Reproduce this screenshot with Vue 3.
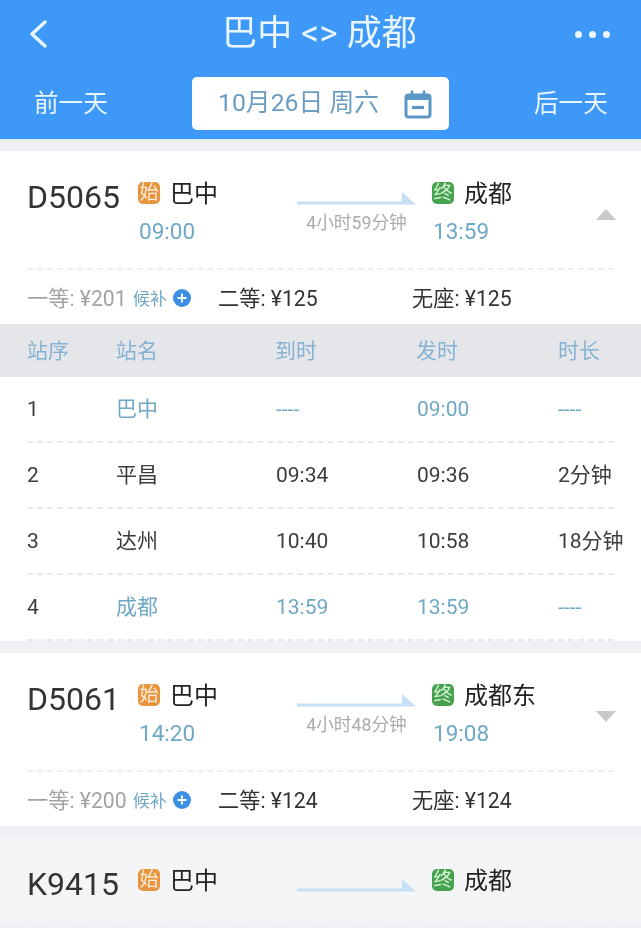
<script setup>
const stops = [
  { n: '1', name: '巴中', arr: '----', dep: '09:00', dur: '----', hi: true, hiDur: true },
  { n: '2', name: '平昌', arr: '09:34', dep: '09:36', dur: '2分钟' },
  { n: '3', name: '达州', arr: '10:40', dep: '10:58', dur: '18分钟' },
  { n: '4', name: '成都', arr: '13:59', dep: '13:59', dur: '----', hi: true, hiDur: true }
]
const trains = [
  { no: 'D5065', from: '巴中', dep: '09:00', to: '成都', arr: '13:59', dur: '4小时59分钟', first: '¥201', second: '¥125', none: '¥125', open: true },
  { no: 'D5061', from: '巴中', dep: '14:20', to: '成都东', arr: '19:08', dur: '4小时48分钟', first: '¥200', second: '¥124', none: '¥124', open: false },
  { no: 'K9415', from: '巴中', to: '成都', partial: true }
]
</script>

<template>
  <div class="page">
    <header class="top">
      <div class="bar">
        <svg class="back" width="18" height="28" viewBox="0 0 18 28"><path d="M16 2 L3 14 L16 26" fill="none" stroke="#e9f5ff" stroke-width="3.4" stroke-linecap="round" stroke-linejoin="round"/></svg>
        <div class="title">巴中 &lt;&gt; 成都</div>
        <div class="dots"><i></i><i></i><i></i></div>
      </div>
      <div class="dates">
        <span class="day">前一天</span>
        <div class="picker">
          <span class="picker-text">10月26日 周六</span>
          <svg class="cal" width="28" height="30" viewBox="0 0 28 30">
            <rect x="2" y="6" width="24" height="22" rx="2.500" fill="none" stroke="#5b97c6" stroke-width="3"/>
            <rect x="2" y="6" width="24" height="5" fill="#5b97c6"/>
            <path d="M8 2.500v6M20 2.500v6" stroke="#5b97c6" stroke-width="2.600" stroke-linecap="round"/>
            <path d="M8 18.500h12" stroke="#5b97c6" stroke-width="3.200"/>
          </svg>
        </div>
        <span class="day">后一天</span>
      </div>
    </header>

    <section v-for="t in trains" :key="t.no" class="card" :class="{ partial: t.partial }">
      <div class="head">
        <div class="no">{{ t.no }}</div>
        <div class="from">
          <div class="station"><b class="badge start">始</b><span class="st-name">{{ t.from }}</span></div>
          <div v-if="t.dep" class="time">{{ t.dep }}</div>
        </div>
        <div class="link">
          <svg class="arrow" width="119" height="14" viewBox="0 0 119 14"><path d="M0 9.500h105V0l14 12.500H0z" fill="#c6e0f5"/></svg>
          <div v-if="t.dur" class="dur">{{ t.dur }}</div>
        </div>
        <div class="to">
          <div class="station"><b class="badge end">终</b><span class="st-name">{{ t.to }}</span></div>
          <div v-if="t.arr" class="time">{{ t.arr }}</div>
        </div>
        <svg v-if="!t.partial" class="toggle" width="20" height="11" viewBox="0 0 20 11">
          <path :d="t.open ? 'M10 0 L20 11 H0 Z' : 'M0 0 H20 L10 11 Z'" fill="#c9c9c9"/>
        </svg>
      </div>
      <div v-if="!t.partial" class="prices">
        <span class="p1">一等: {{ t.first }}</span>
        <span class="wait">候补</span>
        <svg class="plus" width="18" height="18" viewBox="0 0 18 18"><circle cx="9" cy="9" r="9" fill="#3d8fe3"/><path d="M4.500 9h9M9 4.500v9" stroke="#fff" stroke-width="1.800"/></svg>
        <span class="p2">二等: {{ t.second }}</span>
        <span class="p3">无座: {{ t.none }}</span>
      </div>
      <div v-if="t.open" class="table">
        <div class="thead">
          <span>站序</span><span>站名</span><span>到时</span><span>发时</span><span>时长</span>
        </div>
        <div v-for="s in stops" :key="s.n" class="row">
          <span>{{ s.n }}</span>
          <span :class="{ hi: s.hi }">{{ s.name }}</span>
          <span :class="{ hi: s.hi }">{{ s.arr }}</span>
          <span :class="{ hi: s.hi }">{{ s.dep }}</span>
          <span :class="{ hi: s.hiDur }">{{ s.dur }}</span>
        </div>
      </div>
    </section>
  </div>
</template>

<style scoped>
.page {
  width: 641px;
  height: 928px;
  overflow: hidden;
  background: #eff0f3;
  font-family: Roboto, "Noto Sans CJK SC", sans-serif;
  color: #333;
  filter: blur(0.35px);
}
.top {
  background: #3e98f7;
  height: 139px;
  border-bottom: 1px solid #d9edfb;
  margin-bottom: 11px;
  color: #e9f5ff;
}
.bar {
  height: 68px;
  padding: 0 31px 0 29px;
  display: grid;
  grid-template-columns: 1fr auto 1fr;
  align-items: center;
}
.back { justify-self: start; }
.title { font-size: 35px; line-height: 68px; letter-spacing: 0.2px; }
.dots { justify-self: end; display: flex; gap: 7px; }
.dots i { width: 7px; height: 7px; border-radius: 50%; background: #e9f5ff; }
.dates {
  margin-top: 9px;
  padding: 0 34px;
  height: 53px;
  display: flex;
  align-items: center;
  justify-content: space-between;
}
.day { font-size: 24.600px; line-height: 30px; width: 73px; white-space: nowrap; }
.picker {
  width: 257px;
  height: 53px;
  box-sizing: border-box;
  padding-left: 26px;
  background: #fff;
  border-radius: 5px;
  display: flex;
  align-items: center;
}
.picker-text { font-size: 24.800px; line-height: 30px; color: #6b9cc2; width: 186px; white-space: nowrap; margin-top: -2px; }
.card { background: #fff; margin-bottom: 12px; }
.card.partial { background: #f4f5f7; }
.head {
  height: 117px;
  margin: 0 27px;
  border-bottom: 2px dashed #eeeef0;
  display: flex;
  align-items: flex-start;
}
.partial .head { height: 83px; }
.no { width: 111px; margin-top: 26px; font-size: 32px; line-height: 40px; }
.from { width: 159px; }
.from, .to { margin-top: 27px; }
.to { margin-left: 16px; }
.station {
  display: flex;
  align-items: center;
  height: 30px;
  line-height: 30px;
  font-size: 24px;
  color: #222;
  white-space: nowrap;
}
.st-name { margin-top: 2px; }
.badge {
  width: 22px;
  height: 22px;
  margin-right: 10px;
  border-radius: 5px;
  font-size: 19px;
  line-height: 22px;
  font-weight: 400;
  text-align: center;
  color: #fbeedd;
}
.badge.start { background: #e8953f; }
.badge.end { background: #47a24f; color: #d6f3d3; }
.time { margin-top: 8px; padding-left: 1px; height: 30px; line-height: 30px; font-size: 22.500px; color: #6fa8c6; }
.link { width: 119px; margin-top: 41px; }
.arrow { display: block; }
.dur { margin-top: 5px; font-size: 17.700px; line-height: 24px; color: #ababab; text-align: center; white-space: nowrap; }
.toggle { margin-left: auto; margin-top: 58px; margin-right: -2px; }
.prices {
  height: 54px;
  padding-left: 27px;
  display: flex;
  align-items: center;
  font-size: 21.200px;
  line-height: 30px;
  white-space: nowrap;
}
.p1, .wait, .p2, .p3 { margin-top: 3px; }
.p1 { width: 106px; color: #a3a3a3; }
.wait { width: 40px; font-size: 17px; color: #6fa8c6; }
.plus { margin-right: 27px; margin-top: 1px; }
.p2 { width: 194px; }
.table { font-size: 21px; line-height: 30px; }
.thead, .row {
  display: grid;
  white-space: nowrap;
  align-items: center;
}
.thead {
  grid-template-columns: 89px 159px 141px 142px 56px;
  height: 53px;
  padding-left: 27px;
  background: #e4e6ea;
  color: #85b2d2;
}
.row {
  grid-template-columns: 89px 160px 141px 141px 56px;
  height: 64px;
  margin: 0 27px;
  border-bottom: 2px dashed #e9e9ec;
  color: #3c3c3c;
}
.hi { color: #6fa8c6; }
</style>

<style>
html, body { margin: 0; background: #eff0f3; }
</style>
